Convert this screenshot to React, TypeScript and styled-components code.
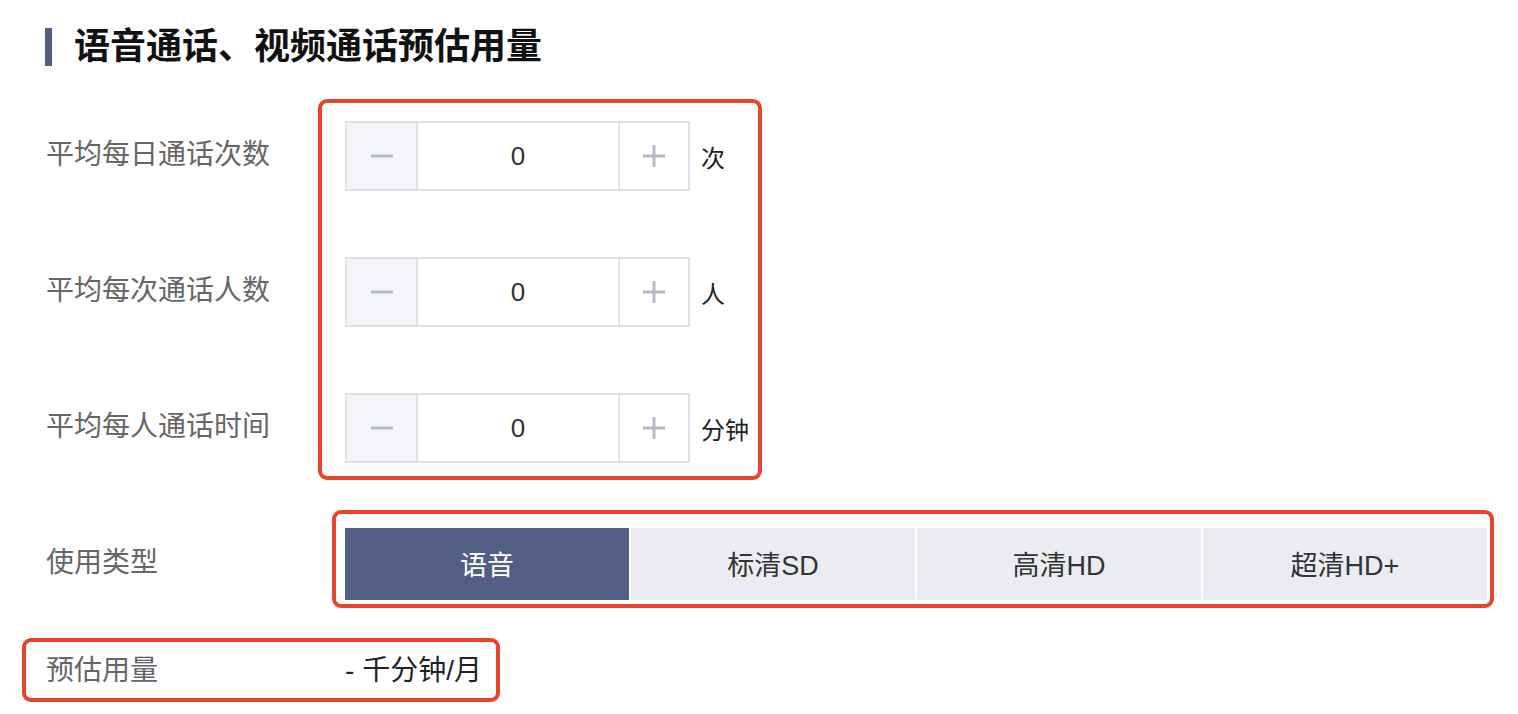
import React, { useState } from "react";
import styled, { createGlobalStyle } from "styled-components";

const GlobalStyle = createGlobalStyle`
  body {
    margin: 0;
    background: #ffffff;
    font-family: "Liberation Sans", "Noto Sans CJK SC", sans-serif;
  }
`;

const Page = styled.div`
  padding: 28px 0 0 45px;
  width: 1518px;
  height: 714px;
  box-sizing: border-box;
`;

const Header = styled.div`
  display: flex;
  align-items: center;
  height: 38px;
  border-left: 7px solid #545c80;
  padding-left: 22px;
`;

const Title = styled.h2`
  margin: 0;
  font-size: 36px;
  font-weight: 700;
  color: #111;
  line-height: 38px;
`;

const Form = styled.div`
  display: grid;
  grid-template-columns: 299px 1fr;
  margin-top: 55px;
  row-gap: 65px;
  padding-left: 1px;
`;

const LabelStack = styled.div`
  display: flex;
  flex-direction: column;
  gap: 66px;
`;

const Label = styled.div<{ $h?: number }>`
  height: ${(p) => p.$h ?? 70}px;
  display: flex;
  align-items: center;
  font-size: 28px;
  color: #666;
  padding-bottom: 8px;
  box-sizing: border-box;
  white-space: nowrap;
`;

const Annotated = styled.div`
  position: relative;
  justify-self: start;
`;

const Mark = styled.div<{ $t: number; $r: number; $b: number; $l: number }>`
  position: absolute;
  top: ${(p) => p.$t}px;
  right: ${(p) => p.$r}px;
  bottom: ${(p) => p.$b}px;
  left: ${(p) => p.$l}px;
  border: 4px solid #e8432b;
  border-radius: 9px;
  pointer-events: none;
`;

const StepperStack = styled.div`
  display: flex;
  flex-direction: column;
  gap: 66px;
  width: 401px;
`;

const StepperRow = styled.div`
  display: flex;
  align-items: center;
  gap: 11px;
`;

const Stepper = styled.div`
  display: flex;
  flex-shrink: 0;
  height: 70px;
  border: 2px solid #dfe1e8;
  box-sizing: border-box;
`;

const StepButton = styled.button<{ $muted?: boolean }>`
  width: ${(p) => (p.$muted ? 69 : 68)}px;
  border: 0;
  padding: 0;
  background: ${(p) => (p.$muted ? "#f4f5f9" : "#ffffff")};
  display: flex;
  align-items: center;
  justify-content: center;
  cursor: pointer;
`;

const ValueBox = styled.div`
  width: 200px;
  border-left: 2px solid #dfe1e8;
  border-right: 2px solid #dfe1e8;
  display: flex;
  align-items: center;
  justify-content: center;
  font-size: 26px;
  color: #333;
`;

const Unit = styled.span`
  font-size: 24px;
  color: #222;
  white-space: nowrap;
`;

const Segments = styled.div`
  display: grid;
  grid-template-columns: repeat(4, 1fr);
  gap: 2px;
  width: 1142px;
  height: 72px;
`;

const Segment = styled.button<{ $active?: boolean }>`
  border: 0;
  padding: 0 0 2px;
  font-family: inherit;
  font-size: 27px;
  background: ${(p) => (p.$active ? "#525e84" : "#ebecf2")};
  color: ${(p) => (p.$active ? "#ffffff" : "#333")};
  cursor: pointer;
`;

const EstimateRow = styled.div`
  grid-column: 1 / 3;
  display: flex;
  width: 436px;
  height: 40px;
  align-items: center;
  justify-content: space-between;
  margin-top: -17px;
  font-size: 28px;
`;

const EstimateLabel = styled.span`
  color: #666;
`;

const EstimateValue = styled.span`
  color: #222;
`;

const Minus = () => (
  <svg width="24" height="24" viewBox="0 0 24 24">
    <rect x="1" y="10.5" width="22" height="3" fill="#b6bac7" />
  </svg>
);

const Plus = () => (
  <svg width="24" height="24" viewBox="0 0 24 24">
    <rect x="1" y="10.5" width="22" height="3" fill="#b6bac7" />
    <rect x="10.5" y="1" width="3" height="22" fill="#b6bac7" />
  </svg>
);

const fields = [
  { label: "平均每日通话次数", unit: "次" },
  { label: "平均每次通话人数", unit: "人" },
  { label: "平均每人通话时间", unit: "分钟" },
];

const types = ["语音", "标清SD", "高清HD", "超清HD+"];

export default function App() {
  const [values, setValues] = useState([0, 0, 0]);
  const [type, setType] = useState(0);

  const change = (i: number, d: number) =>
    setValues((v) => v.map((x, j) => (j === i ? Math.max(0, x + d) : x)));

  return (
    <Page>
      <GlobalStyle />
      <Header>
        <Title>语音通话、视频通话预估用量</Title>
      </Header>
      <Form>
        <LabelStack>
          {fields.map((f) => (
            <Label key={f.label}>{f.label}</Label>
          ))}
        </LabelStack>
        <Annotated>
          <StepperStack>
            {fields.map((f, i) => (
              <StepperRow key={f.label}>
                <Stepper>
                  <StepButton $muted onClick={() => change(i, -1)}>
                    <Minus />
                  </StepButton>
                  <ValueBox>{values[i]}</ValueBox>
                  <StepButton onClick={() => change(i, 1)}>
                    <Plus />
                  </StepButton>
                </Stepper>
                <Unit>{f.unit}</Unit>
              </StepperRow>
            ))}
          </StepperStack>
          <Mark $t={-22} $r={-16} $b={-17} $l={-27} />
        </Annotated>

        <Label $h={72}>使用类型</Label>
        <Annotated>
          <Segments>
            {types.map((t, i) => (
              <Segment key={t} $active={type === i} onClick={() => setType(i)}>
                {t}
              </Segment>
            ))}
          </Segments>
          <Mark $t={-18} $r={-7} $b={-8} $l={-13} />
        </Annotated>

        <EstimateRow as={Annotated}>
          <EstimateLabel>预估用量</EstimateLabel>
          <EstimateValue>- 千分钟/月</EstimateValue>
          <Mark $t={-10} $r={-18} $b={-14} $l={-24} />
        </EstimateRow>
      </Form>
    </Page>
  );
}
